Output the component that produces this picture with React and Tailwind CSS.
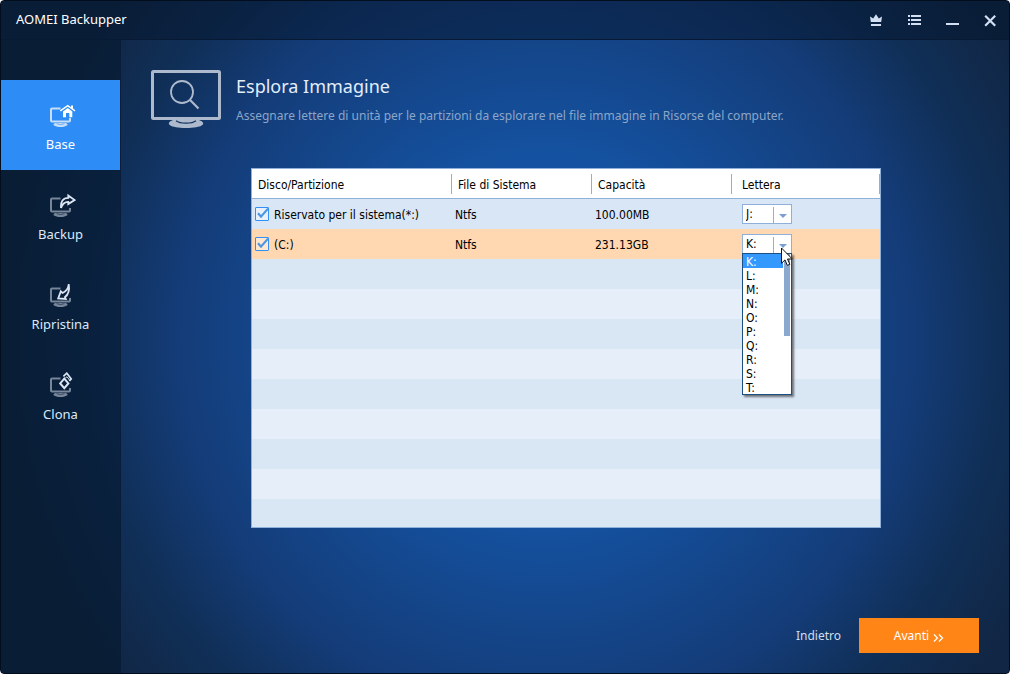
import { useState } from "react";

const PARTITIONS = [
  { id: "reserved", name: "Riservato per il sistema(*:)", fs: "Ntfs", size: "100.00MB" },
  { id: "c", name: "(C:)", fs: "Ntfs", size: "231.13GB" },
];

const LETTERS = ["K:", "L:", "M:", "N:", "O:", "P:", "Q:", "R:", "S:", "T:"];

const EMPTY_ROWS = [0, 1, 2, 3, 4, 5, 6, 7, 8];

// Small monitor shared by every sidebar icon, the glyph is drawn over it
const NavIcon = ({ active, children }) => (
  <svg width="30" height="26" viewBox="0 -2 30 26" fill="none" aria-hidden="true">
    <g opacity={active ? "0.85" : "0.5"} stroke="#e4edf8">
      <path d="M14.5 4.5H6Q5 4.5 5 5.5V16.5Q5 17.5 6 17.5H23Q24 17.5 24 16.5V14" strokeWidth="2" />
      <path d="M9.5 19h10c4.5 1.4 1 4-5 4s-9.5-2.600-5-4z" fill="#e4edf8" stroke="none" />
      <path d="M10.5 19.6q4 1.8 8 0" strokeWidth="0.6" stroke={active ? "#2d8cf5" : "#0a2040"} />
    </g>
    {children}
  </svg>
);

const NAV = [
  {
    label: "Base",
    glyph: (
      <>
        <path d="M14.3 6.8L21.7 1.6 29 6.8" stroke="#fff" strokeWidth="1.5" />
        <path d="M25 1.5h2v3.8l-2-1.5z" fill="#fff" />
        <path d="M17 7.6l4.7-3.6 4.6 3.6v5.6h-3V9h-3.3v4.2H17z" fill="#fff" />
      </>
    ),
  },
  {
    label: "Backup",
    glyph: (
      <path d="M15 14C14.5 7.5 17 4 22.3 3.9V1.6L28.6 6 22.3 10V7.8C18.5 7.8 16.2 10 15 14z" stroke="#dce6f3" strokeWidth="1.8" />
    ),
  },
  {
    label: "Ripristina",
    glyph: (
      <path d="M22.8 0C23.6 6 22.2 10.8 19 13L19.8 15 12.2 14.4 14.8 7.4 16.6 9C20.5 7.2 22.4 4 22.8 0z" stroke="#dce6f3" strokeWidth="1.8" />
    ),
  },
  {
    label: "Clona",
    glyph: (
      <g stroke="#dce6f3" strokeWidth="2">
        <path d="M18.3 4.6L14.2 9.4 18.3 14.2 22.4 9.4z" />
        <path d="M17.4 2.4L20.8 -0.8 25.2 5 23.4 7" strokeWidth="1.7" />
        <path d="M19.4 3.8L21 2.8 23.6 6.2" strokeWidth="1" />
      </g>
    ),
  },
];

const TitleBar = () => (
  <header className="flex h-[39px] shrink-0 items-center justify-between border-b border-[#081a33] bg-[#03132a]/50 pl-[15px] pr-[11px]">
    <h1 className="text-[13px] text-white">AOMEI Backupper</h1>
    <div className="flex gap-[22px] text-[#d3e0f3]">
      <button className="h-4 w-4" aria-label="Aggiorna">
        <svg width="16" height="16" viewBox="0 0 16 16" fill="currentColor">
          <path d="M2 4.5l3.2 2L8 2.2l2.8 4.3 3.2-2L13.2 10H2.8zM3 12h10v2H3z" />
        </svg>
      </button>
      <button className="h-4 w-4" aria-label="Menu">
        <svg width="16" height="16" viewBox="0 0 16 16" fill="currentColor" shapeRendering="crispEdges">
          <path d="M2 3h2v2H2zM5 3h10v2H5zM2 7h2v2H2zM5 7h10v2H5zM2 11h2v2H2zM5 11h10v2H5z" />
        </svg>
      </button>
      <button className="h-4 w-4" aria-label="Riduci a icona">
        <svg width="16" height="16" viewBox="0 0 16 16" fill="currentColor" shapeRendering="crispEdges">
          <path d="M2 11h13v2H2z" />
        </svg>
      </button>
      <button className="h-4 w-4" aria-label="Chiudi">
        <svg width="16" height="16" viewBox="0 0 16 16" stroke="currentColor" strokeWidth="2.2">
          <path d="M3.2 3.8l10 10M13.2 3.8l-10 10" />
        </svg>
      </button>
    </div>
  </header>
);

const Sidebar = () => (
  <nav className="w-[120px] shrink-0 border-r border-[#0a1d38] bg-[#03152a]/55 pt-10">
    {NAV.map((item, i) => (
      <a
        key={item.label}
        href="#"
        className={`flex h-[90px] flex-col items-center pt-[22px] text-[13px] leading-5 ${i === 0 ? "bg-[#2d8cf5] text-white" : "text-[#dbe8fa]"}`}
      >
        <NavIcon active={i === 0}>{item.glyph}</NavIcon>
        <span className="mt-[6px]">{item.label}</span>
      </a>
    ))}
  </nav>
);

const LetterSelect = ({ id, value, onChange, open }) => (
  <div className="relative w-[50px]">
    <select
      aria-label="Lettera"
      value={value}
      onChange={(e) => onChange(id, e.target.value)}
      className="block h-5 w-full appearance-none border border-[#8fb0d9] bg-white pl-[3px] text-[12px] leading-4 outline-none"
    >
      <option>J:</option>
      {LETTERS.map((l) => (
        <option key={l}>{l}</option>
      ))}
    </select>
    <div className="pointer-events-none absolute inset-y-0 right-0 flex w-[19px] items-center justify-center pt-1">
      <span className="absolute bottom-0 left-0 top-[3px] w-px bg-[#8fb0d9]" />
      <svg width="8" height="4" viewBox="0 0 8 4" fill="#7b9fd3">
        <path d="M0 0h8L4 4z" />
      </svg>
    </div>
    {open && (
      <ul role="listbox" className="absolute left-0 top-[19px] z-10 h-[142px] w-[50px] overflow-hidden border border-[#1c4f82] bg-white shadow-[2px_2px_2px_rgba(0,0,0,0.5)]">
        {LETTERS.map((l) => (
          <li
            key={l}
            role="option"
            aria-selected={l === value}
            className={`mr-2 h-[14px] pl-[3px] text-[12px] leading-4 ${l === value ? "bg-[#3399ff] text-white" : ""}`}
          >
            {l}
          </li>
        ))}
        <span className="absolute right-px top-0 h-[82px] w-[6px] bg-[#8ba8cf]" />
      </ul>
    )}
    {open && (
      <svg className="absolute left-[39px] top-[13px] z-20" width="12" height="20" viewBox="0 0 12 20">
        <path d="M0.5 1V16.3L4 12.9 6.3 18.4 8.8 17.3 6.5 12H11.3z" fill="#fff" stroke="#111" />
      </svg>
    )}
  </div>
);

const HEAD = "h-[30px] border-b border-[#8fb0d9] p-0 font-normal";
const HEAD_LABEL = "h-5 border-r border-[#8fb0d9] pt-px leading-5";
const CELL = "h-[30px] p-0";

const PartitionTable = () => {
  const [letters, setLetters] = useState({ reserved: "J:", c: "K:" });
  const [checked, setChecked] = useState({ reserved: true, c: true });

  const changeLetter = (id, letter) => setLetters({ ...letters, [id]: letter });
  const toggle = (id) => setChecked({ ...checked, [id]: !checked[id] });

  return (
    <div className="h-[360px] border border-[#8fb0d9] bg-[#d9e6f4]">
      <div className="h-full overflow-hidden">
        <table className="w-full table-fixed border-separate border-spacing-0 text-left font-['DejaVu_Sans_Condensed',sans-serif] text-[12px] leading-4 text-black">
          <thead className="bg-white">
            <tr>
              <th className={`w-[200px] ${HEAD}`}><div className={`pl-[6px] ${HEAD_LABEL}`}>Disco/Partizione</div></th>
              <th className={`w-[140px] ${HEAD}`}><div className={`pl-[6px] ${HEAD_LABEL}`}>File di Sistema</div></th>
              <th className={`w-[140px] ${HEAD}`}><div className={`pl-[6px] ${HEAD_LABEL}`}>Capacità</div></th>
              <th className={HEAD}><div className={`pl-[10px] ${HEAD_LABEL}`}>Lettera</div></th>
            </tr>
          </thead>
          <tbody>
            {PARTITIONS.map((p) => (
              <tr key={p.id} className={p.id === "c" ? "bg-[#ffd7b1]" : "bg-[#d9e6f6]"}>
                <td className={CELL}>
                  <label className="flex items-center gap-[5px] pl-[3px]">
                    <span className="relative h-[14px] w-[14px]">
                      <input
                        type="checkbox"
                        checked={checked[p.id]}
                        onChange={() => toggle(p.id)}
                        className="peer block h-[14px] w-[14px] appearance-none rounded-[1px] border border-[#3390f5] bg-white/40"
                      />
                      <svg className="pointer-events-none absolute left-0 top-0 hidden peer-checked:block" width="14" height="14" viewBox="0 0 14 14" fill="none">
                        <path d="M3 6.2L6 9.6 13 1.6" stroke="#4d95e0" strokeWidth="2.2" />
                      </svg>
                    </span>
                    <span className="pt-px">{p.name}</span>
                  </label>
                </td>
                <td className={`${CELL} pl-[3px]! pt-px!`}>{p.fs}</td>
                <td className={`${CELL} pl-[3px]! pt-px!`}>{p.size}</td>
                <td className={`${CELL} pl-[10px]!`}>
                  <LetterSelect id={p.id} value={letters[p.id]} onChange={changeLetter} open={p.id === "c"} />
                </td>
              </tr>
            ))}
            {EMPTY_ROWS.map((n) => (
              <tr key={n} className="odd:bg-[#d9e6f4] even:bg-[#e6eef9]">
                <td className={CELL} colSpan={4} />
              </tr>
            ))}
          </tbody>
        </table>
      </div>
    </div>
  );
};

const App = () => (
  <div className="flex min-h-screen flex-col overflow-hidden rounded-[4px] border border-[#020d1d] bg-[radial-gradient(ellipse_48%_74%_at_54%_50%,#1458ac_0%,#14519f_38%,#143c78_76%,#102f57_94%,#112644_112%)] font-['Noto_Sans',sans-serif]">
    <TitleBar />
    <div className="flex grow">
      <Sidebar />
      <main className="flex grow flex-col">
        <div className="flex gap-[15px] pl-[30px] pt-[30px]">
          <svg width="70" height="60" viewBox="0 0 70 60" fill="none" stroke="#adbacd" aria-hidden="true">
            <rect x="1.5" y="1.5" width="67" height="47" rx="1" strokeWidth="3" />
            <circle cx="31" cy="22" r="11" strokeWidth="1.8" />
            <path d="M38.8 29.8L47.5 38.5" strokeWidth="2.2" />
            <path d="M22 50C13 53.5 19 58 35 58S57 53.5 48 50z" fill="#adbacd" stroke="none" />
            <path d="M25 50.8C29 54 41 54 45 50.8" stroke="#12305c" strokeWidth="1.2" />
          </svg>
          <div>
            <h2 className="mt-1 text-[18px] leading-6 text-[#e3eefb]">Esplora Immagine</h2>
            <p className="mt-2 text-[12px] leading-5 text-[#8ca6c9]">
              Assegnare lettere di unità per le partizioni da esplorare nel file immagine in Risorse del computer.
            </p>
          </div>
        </div>
        <div className="mt-[38px] pl-[130px] pr-[128px]">
          <PartitionTable />
        </div>
        <footer className="mb-5 mr-[30px] mt-auto flex items-center justify-end gap-[18px] text-[12px]">
          <button className="text-[#d0def0]">Indietro</button>
          <button className="flex h-[35px] w-[120px] items-center justify-center gap-1 bg-[#ff8517] text-white">
            Avanti
            <svg className="mt-1" width="11" height="8" viewBox="0 0 11 8" fill="none" stroke="currentColor" strokeWidth="1.3">
              <path d="M1 0.5L4.5 4 1 7.5M6 0.5L9.5 4 6 7.5" />
            </svg>
          </button>
        </footer>
      </main>
    </div>
  </div>
);

export default App;
